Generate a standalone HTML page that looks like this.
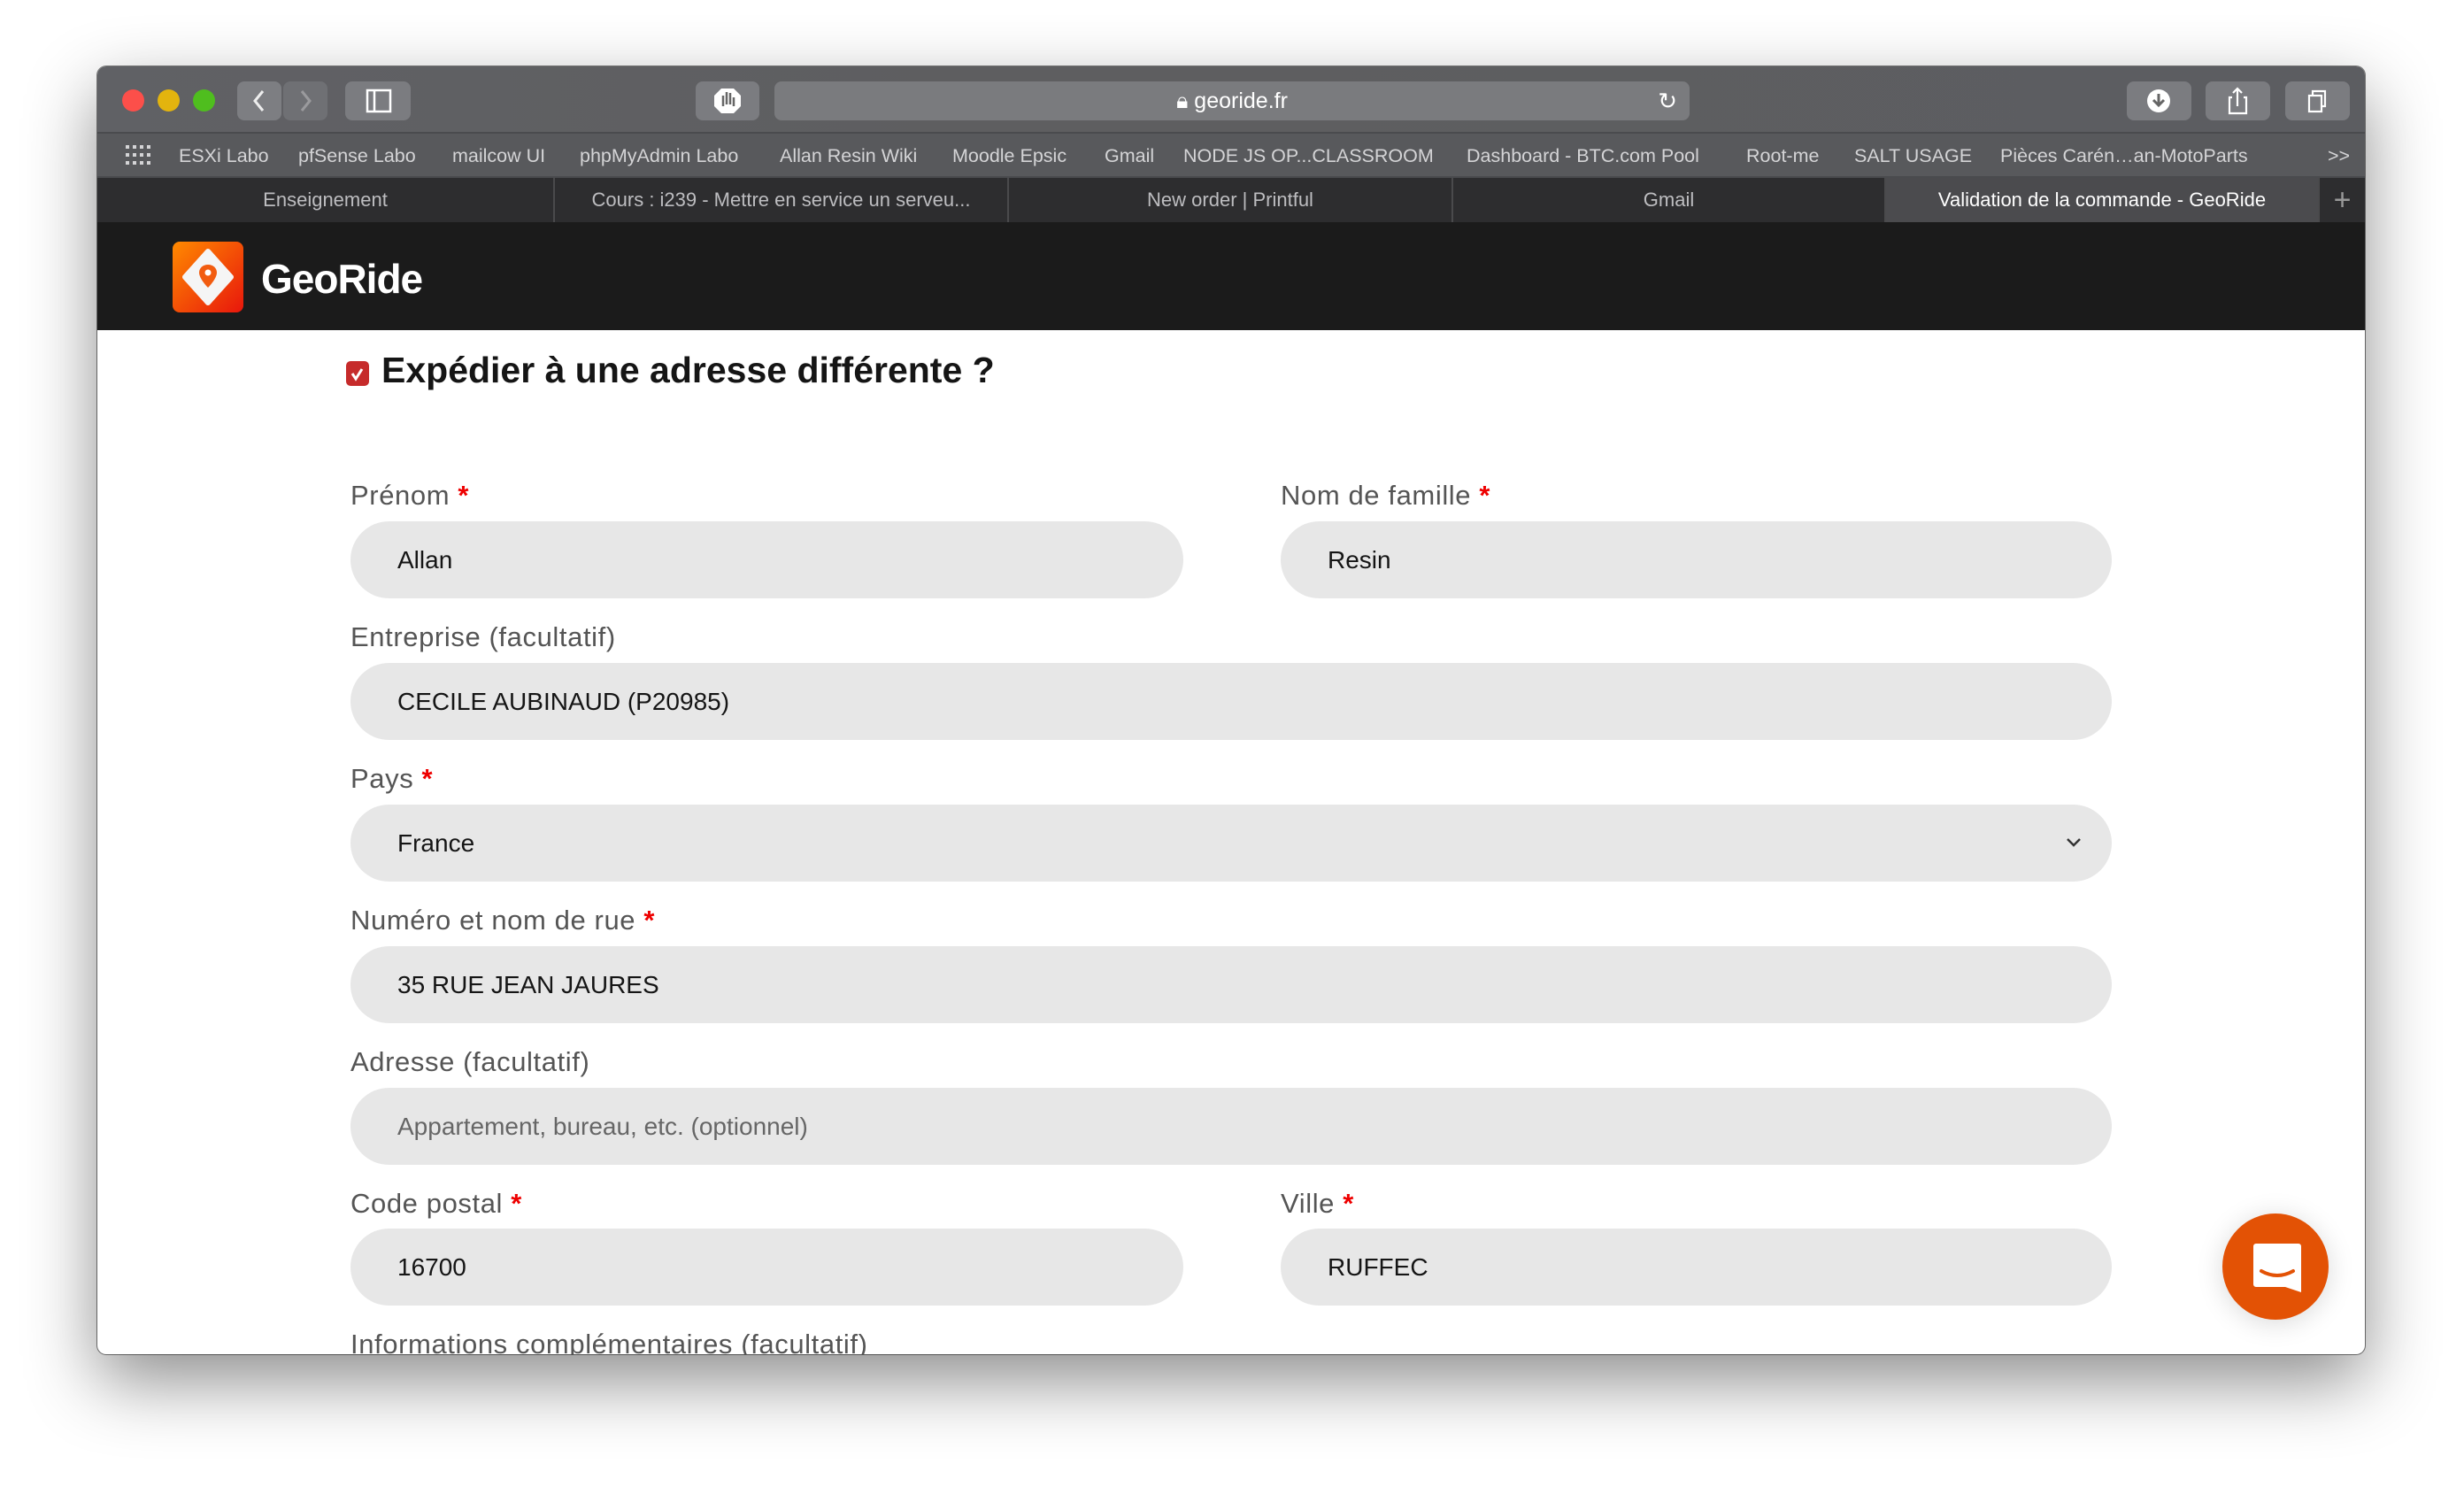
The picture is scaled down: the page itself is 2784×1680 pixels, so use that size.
<!DOCTYPE html>
<html><head><meta charset="utf-8"><style>
*{margin:0;padding:0;box-sizing:border-box}
body{width:2784px;height:1680px;background:#fff;position:relative;overflow:hidden;font-family:"Liberation Sans",sans-serif}
.abs{position:absolute}
.win{left:110px;top:75px;width:2562px;height:1455px;border-radius:10px;overflow:hidden;box-shadow:0 30px 80px rgba(0,0,0,.45),0 0 0 1px rgba(0,0,0,.5);background:#fff}
.tb{left:0;top:0;width:2562px;height:76px;background:linear-gradient(90deg,#606165,#5e5e60 40%,#5c5d61);border-bottom:2px solid #4a4b4e}
.btn{position:absolute;top:17px;height:44px;background:#7b7c80;border-radius:8px}
.bm{left:0;top:76px;width:2562px;height:50px;background:#58595c;border-bottom:2px solid #4a4b4e;color:#d4d4d6;font-size:21.5px}
.bm span{position:absolute;top:13px;white-space:nowrap}
.tabs{left:0;top:126px;width:2562px;height:50px;background:#2d2d2f;color:#bdbdc0;font-size:22px}
.tab{position:absolute;top:0;height:50px;border-right:2px solid #4a4a4c;text-align:center;line-height:50px;white-space:nowrap;overflow:hidden}
.hdr{left:0;top:176px;width:2562px;height:122px;background:#1b1b1b}
.lbl{position:absolute;font-size:31px;color:#555;white-space:nowrap;letter-spacing:0.6px}
.lbl b{color:#e00;font-weight:bold}
.in{position:absolute;height:87px;background:#e7e7e7;border-radius:44px;font-size:28px;color:#151515;padding-left:53px;line-height:87px;white-space:nowrap}
</style></head><body>
<div class="abs win">
 <div class="abs tb">
  <div class="abs" style="left:28px;top:26px;width:25px;height:25px;border-radius:50%;background:#fc4f4a"></div>
  <div class="abs" style="left:68px;top:26px;width:25px;height:25px;border-radius:50%;background:#e3b40e"></div>
  <div class="abs" style="left:108px;top:26px;width:25px;height:25px;border-radius:50%;background:#4fbe1e"></div>
  <div class="btn" style="left:158px;width:50px;background:#7d7e82"><svg width="50" height="44"><path d="M29 11 L20 22 L29 33" stroke="#eee" stroke-width="3" fill="none"/></svg></div>
  <div class="btn" style="left:210px;width:50px;background:#6f7074"><svg width="50" height="44"><path d="M21 11 L30 22 L21 33" stroke="#9a9a9d" stroke-width="3" fill="none"/></svg></div>
  <div class="btn" style="left:280px;width:74px"><svg width="74" height="44"><rect x="25" y="10" width="26" height="24" stroke="#fff" stroke-width="2.5" fill="none"/><line x1="33" y1="10" x2="33" y2="34" stroke="#fff" stroke-width="2.5"/></svg></div>
  <div class="btn" style="left:676px;width:72px"><svg width="72" height="44"><polygon points="29,8 43,8 51,16 51,28 43,36 29,36 21,28 21,16" fill="#fff"/><path d="M31 28 v-12 M35 26 v-14 M39 26 v-13 M43 28 v-10" stroke="#666" stroke-width="2.5"/></svg></div>
  <div class="btn" style="left:765px;width:1034px;background:#7a7b7e;color:#fff;font-size:25px;text-align:center;line-height:44px">🔒︎ georide.fr<span style="position:absolute;right:14px;top:0;font-size:26px">↻</span></div>
  <div class="btn" style="left:2293px;width:73px"><svg width="73" height="44"><circle cx="36" cy="22" r="13" fill="#fff"/><path d="M36 14v12 M30 21l6 6 6-6" stroke="#666" stroke-width="3" fill="none"/></svg></div>
  <div class="btn" style="left:2382px;width:73px"><svg width="73" height="44"><path d="M30 18h-3v18h19v-18h-3 M36 28v-20 M31 13l5-5 5 5" stroke="#fff" stroke-width="2.2" fill="none"/></svg></div>
  <div class="btn" style="left:2472px;width:73px"><svg width="73" height="44"><rect x="27" y="16" width="14" height="18" stroke="#fff" stroke-width="2.2" fill="none"/><path d="M31 16v-5h14v17h-4" stroke="#fff" stroke-width="2.2" fill="none"/></svg></div>
 </div>
 <div class="abs bm">
  <svg class="abs" style="left:32px;top:13px" width="30" height="24"><g fill="#d4d4d6"><rect x="0" y="0" width="4" height="4"/><rect x="8" y="0" width="4" height="4"/><rect x="16" y="0" width="4" height="4"/><rect x="24" y="0" width="4" height="4"/><rect x="0" y="9" width="4" height="4"/><rect x="8" y="9" width="4" height="4"/><rect x="16" y="9" width="4" height="4"/><rect x="24" y="9" width="4" height="4"/><rect x="0" y="18" width="4" height="4"/><rect x="8" y="18" width="4" height="4"/><rect x="16" y="18" width="4" height="4"/><rect x="24" y="18" width="4" height="4"/></g></svg>
  <span style="left:92px">ESXi Labo</span><span style="left:227px">pfSense Labo</span><span style="left:401px">mailcow UI</span><span style="left:545px">phpMyAdmin Labo</span><span style="left:771px">Allan Resin Wiki</span><span style="left:966px">Moodle Epsic</span><span style="left:1138px">Gmail</span><span style="left:1227px">NODE JS OP...CLASSROOM</span><span style="left:1547px">Dashboard - BTC.com Pool</span><span style="left:1863px">Root-me</span><span style="left:1985px">SALT USAGE</span><span style="left:2150px">Pièces Carén…an-MotoParts</span><span style="left:2520px">&gt;&gt;</span>
 </div>
 <div class="abs tabs">
  <div class="tab" style="left:0;width:517px">Enseignement</div>
  <div class="tab" style="left:517px;width:513px">Cours : i239 - Mettre en service un serveu...</div>
  <div class="tab" style="left:1030px;width:502px">New order | Printful</div>
  <div class="tab" style="left:1532px;width:489px">Gmail</div>
  <div class="tab" style="left:2021px;width:490px;background:#4b4b4e;color:#fff">Validation de la commande - GeoRide</div>
  <div class="tab" style="left:2511px;width:51px;border:none;font-size:34px;color:#999">+</div>
 </div>
 <div class="abs hdr">
  <svg class="abs" style="left:85px;top:22px" width="80" height="80"><defs><linearGradient id="g" x1="0" y1="0" x2="1" y2="1"><stop offset="0" stop-color="#ff8a00"/><stop offset="1" stop-color="#e8160c"/></linearGradient></defs><rect width="80" height="80" rx="8" fill="url(#g)"/><path d="M40 11 L66 40 L40 69 L14 40 Z" fill="#f5f5f5" stroke="#f5f5f5" stroke-width="6" stroke-linejoin="round"/><path d="M40 26c-6 0-10 4-10 9 0 7 10 17 10 17s10-10 10-17c0-5-4-9-10-9z" fill="#f25c10"/><circle cx="40" cy="35" r="3.5" fill="#fff"/></svg>
  <div class="abs" style="left:185px;top:37px;font-size:46px;color:#fff;font-weight:bold;letter-spacing:-1px">GeoRide</div>
 </div>
 <div class="abs" style="left:281px;top:333px;width:26px;height:28px;background:#c62b2b;border-radius:5px"><svg width="26" height="28"><path d="M7 14l4 6 7-11" stroke="#fff" stroke-width="3" fill="none"/></svg></div>
 <div class="abs" style="left:321px;top:320px;font-size:41px;font-weight:bold;color:#151515;white-space:nowrap">Expédier à une adresse différente ?</div>

 <div class="lbl" style="left:286px;top:467px">Prénom <b>*</b></div>
 <div class="lbl" style="left:1337px;top:467px">Nom de famille <b>*</b></div>
 <div class="in" style="left:286px;top:514px;width:941px">Allan</div>
 <div class="in" style="left:1337px;top:514px;width:939px">Resin</div>
 <div class="lbl" style="left:286px;top:627px">Entreprise (facultatif)</div>
 <div class="in" style="left:286px;top:674px;width:1990px">CECILE AUBINAUD (P20985)</div>
 <div class="lbl" style="left:286px;top:787px">Pays <b>*</b></div>
 <div class="in" style="left:286px;top:834px;width:1990px">France<svg style="position:absolute;right:34px;top:36px" width="18" height="14"><path d="M2 3l7 7 7-7" stroke="#333" stroke-width="2.5" fill="none"/></svg></div>
 <div class="lbl" style="left:286px;top:947px">Numéro et nom de rue <b>*</b></div>
 <div class="in" style="left:286px;top:994px;width:1990px">35 RUE JEAN JAURES</div>
 <div class="lbl" style="left:286px;top:1107px">Adresse (facultatif)</div>
 <div class="in" style="left:286px;top:1154px;width:1990px;color:#666">Appartement, bureau, etc. (optionnel)</div>
 <div class="lbl" style="left:286px;top:1267px">Code postal <b>*</b></div>
 <div class="lbl" style="left:1337px;top:1267px">Ville <b>*</b></div>
 <div class="in" style="left:286px;top:1313px;width:941px">16700</div>
 <div class="in" style="left:1337px;top:1313px;width:939px">RUFFEC</div>
 <div class="lbl" style="left:286px;top:1426px">Informations complémentaires (facultatif)</div>

 <div class="abs" style="left:2401px;top:1296px;width:120px;height:120px;border-radius:50%;background:#e35205;box-shadow:0 4px 30px rgba(0,0,0,.15)"><svg width="120" height="120"><path d="M38 34h48a3 3 0 0 1 3 3v52l-18-6h-33a3 3 0 0 1-3-3v-43a3 3 0 0 1 3-3z" fill="#fff"/><path d="M44 65q18 10 36 0" stroke="#e35205" stroke-width="4" fill="none" stroke-linecap="round"/></svg></div>
</div>
</body></html>
